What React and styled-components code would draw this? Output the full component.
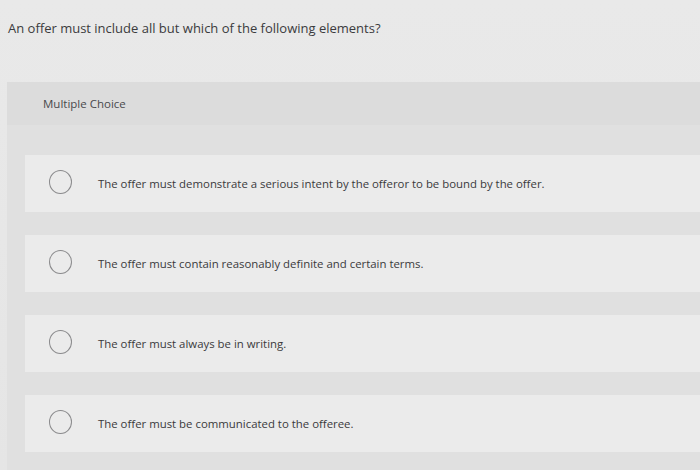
import React from 'react';
import styled, { createGlobalStyle } from 'styled-components';

const GlobalStyle = createGlobalStyle`
  html, body {
    margin: 0;
    padding: 0;
    background: #e6e6e6;
    font-family: "Open Sans", Lato, "Liberation Sans", sans-serif;
  }
`;

const Page = styled.div`
  width: 700px;
  height: 470px;
  overflow: hidden;
  background: linear-gradient(180deg, #e9e9e9 0%, #e5e5e5 100%);
`;

const Question = styled.div`
  padding: 19px 8px 0;
  height: 82px;
  box-sizing: border-box;
  font-size: 13px;
  color: #3b3b3d;
`;

const Card = styled.div`
  margin-left: 7px;
`;

const Header = styled.div`
  height: 43px;
  display: flex;
  align-items: center;
  padding-left: 36px;
  background: #dcdcdc;
  font-size: 11.5px;
  color: #4a4a4c;
`;

const OptionList = styled.div`
  display: flex;
  flex-direction: column;
  gap: 23px;
  padding: 30px 0 30px 18px;
  background: #e0e0e0;
`;

const Option = styled.div`
  height: 57px;
  display: flex;
  align-items: center;
  gap: 26px;
  padding-left: 24px;
  background: #ebebeb;
`;

const Radio = styled.span`
  width: 21px;
  height: 22px;
  border-radius: 50%;
  border: 1.5px solid #8a8a8c;
  flex-shrink: 0;
  margin-top: -3px;
`;

const Label = styled.span`
  font-size: 11.4px;
  color: #3a3a3c;
`;

const options = [
  'The offer must demonstrate a serious intent by the offeror to be bound by the offer.',
  'The offer must contain reasonably definite and certain terms.',
  'The offer must always be in writing.',
  'The offer must be communicated to the offeree.',
];

export default function App() {
  return (
    <Page>
      <GlobalStyle />
      <Question>An offer must include all but which of the following elements?</Question>
      <Card>
        <Header>Multiple Choice</Header>
        <OptionList>
          {options.map((text, i) => (
            <Option key={i}>
              <Radio />
              <Label>{text}</Label>
            </Option>
          ))}
        </OptionList>
      </Card>
    </Page>
  );
}
